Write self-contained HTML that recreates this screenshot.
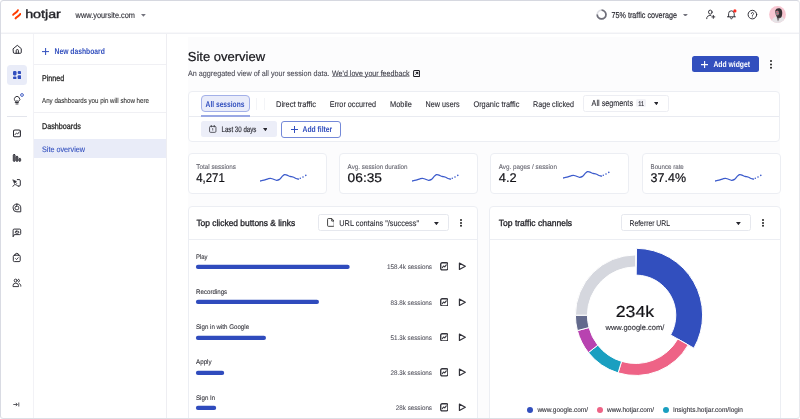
<!DOCTYPE html>
<html lang="en"><head><meta charset="utf-8"><title>Hotjar – Site overview</title>
<style>
html,body{margin:0;padding:0;background:#fff}
body{width:800px;height:419px;overflow:hidden;position:relative;font-family:"Liberation Sans", sans-serif}
#frame{position:absolute;left:0;top:0;width:800px;height:419px;box-sizing:border-box;border:1px solid #d6d8e0;border-right-color:#e6e8ed;border-bottom-color:#dddfe6;border-left-color:#d9dbe3;border-radius:3.500px;overflow:hidden;background:#fff}
#in{position:absolute;left:-1px;top:-1px;width:800px;height:419px}
.a{position:absolute;display:block}
.t{position:absolute;display:block;white-space:nowrap;line-height:1;transform-origin:0 50%}
.card{position:absolute;box-sizing:border-box;background:#fff;border:1px solid #eceef3;border-radius:4px}
.bar{position:absolute;height:4.200px;border-radius:2.100px;background:#2f4bbd}
</style></head><body><div id="frame"><div id="in">
<div class="a" style="left:188px;top:37px;width:592px;height:382px;background:#fcfcfd"></div>
<div class="a" style="left:0;top:32px;width:800px;height:1px;background:#f8f8fa"></div><div class="a" style="left:0;top:33px;width:800px;height:1px;background:#eff0f4"></div>
<div class="a" style="left:33px;top:34px;width:1px;height:386px;background:#f2f2f6"></div>
<div class="a" style="left:166px;top:34px;width:1px;height:386px;background:#eeeef2"></div>
<div class="a" style="left:34px;top:64px;width:132px;height:1px;background:#f0f0f4"></div>
<div class="a" style="left:34px;top:112px;width:132px;height:1px;background:#f0f0f4"></div>
<div class="a" style="left:34px;top:139.300px;width:132px;height:18.600px;background:#e9ecf8"></div>
<div class="a" style="left:6.600px;top:64.700px;width:20.400px;height:20.400px;border-radius:3.500px;background:#e9ecf8"></div>
<div class="a" style="left:7px;top:116px;width:20px;height:1px;background:#e3e5ec"></div>
<svg class="a" style="left:42.0px;top:47.6px" width="7.2" height="7.2" viewBox="0 0 7.2 7.2"><path d="M3.6 0V7.2M0 3.6H7.2" stroke="#324fbe" stroke-width="1" fill="none"/></svg><div class="a" style="left:692.4px;top:55.7px;width:66.400px;height:16.800px;background:#324fbe;border-radius:2.500px"></div><svg class="a" style="left:701.3px;top:60.6px" width="7.2" height="7.2" viewBox="0 0 7.2 7.2"><path d="M3.6 0V7.2M0 3.6H7.2" stroke="#fff" stroke-width="1.1" fill="none"/></svg><svg class="a" style="left:769px;top:58.800000000000004px" width="4" height="10.8" viewBox="0 0 4 10.8"><circle cx="2" cy="2.0" r="1.0" fill="#222"/><circle cx="2" cy="5.4" r="1.0" fill="#222"/><circle cx="2" cy="8.8" r="1.0" fill="#222"/></svg><svg class="a" style="left:412.500px;top:69.500px" width="7.200" height="7.200" viewBox="0 0 12 12" fill="none" stroke="#1c1c22" stroke-width="1.700"><rect x="1" y="1" width="10" height="10" rx="1.600"/><path d="M4 8L8 4" stroke-width="1.600"/><path d="M4.500 3.500H8.500V7.500Z" fill="#1c1c22" stroke-width="0.600"/></svg><div class="card" style="left:188px;top:91px;width:592px;height:51px"></div><div class="a" style="left:189px;top:116px;width:590px;height:1px;background:#e9ebf1"></div><div class="a" style="left:200.700px;top:95.200px;width:49.400px;height:17.300px;box-sizing:border-box;background:#e9ecfa;border:1px solid #a3b0e8;border-radius:4px"></div><div class="a" style="left:200.700px;top:115px;width:49.400px;height:1.700px;background:#9aa8e4"></div><div class="a" style="left:256px;top:97.500px;width:1px;height:12px;background:#f3f4f7"></div><div class="a" style="left:264px;top:97.500px;width:1px;height:12px;background:#f3f4f7"></div><div class="a" style="left:583.200px;top:94.500px;width:85.600px;height:17px;box-sizing:border-box;background:#fff;border:1px solid #edeef3;border-radius:2.500px"></div><div class="a" style="left:636px;top:99.400px;width:10.200px;height:7.800px;background:#f3f3f7;border-radius:1.500px"></div><svg class="a" style="left:653.6px;top:101.9px" width="4.8" height="3.2" viewBox="0 0 4.8 3.2"><path d="M0 0H4.8L2.4 3.2Z" fill="#26262e"/></svg><div class="a" style="left:200.800px;top:121.200px;width:76.200px;height:16px;background:#eceef8;border-radius:2.500px"></div><svg class="a" style="left:209px;top:125.300px" width="7.500" height="7.900" viewBox="0 0 14 14.800" fill="none" stroke="#2a2a32" stroke-width="1.400"><rect x="1" y="2.600" width="12" height="11.200" rx="2"/><path d="M4.200 0.600v3M9.800 0.600v3" stroke-linecap="round"/><path d="M7 6.500v4M5.800 7.200L7 6.500" stroke-width="1.200"/></svg><svg class="a" style="left:262.6px;top:128.1px" width="4.8" height="3.2" viewBox="0 0 4.8 3.2"><path d="M0 0H4.8L2.4 3.2Z" fill="#26262e"/></svg><div class="a" style="left:281px;top:120.800px;width:60px;height:16.800px;box-sizing:border-box;background:#fff;border:1px solid #7489d8;border-radius:3px"></div><svg class="a" style="left:290.6px;top:125.69999999999999px" width="7" height="7" viewBox="0 0 7 7"><path d="M3.5 0V7M0 3.5H7" stroke="#324fbe" stroke-width="1" fill="none"/></svg><div class="card" style="left:188px;top:206px;width:290px;height:230px"></div><div class="a" style="left:189px;top:239px;width:288px;height:1px;background:#eceef3"></div><div class="card" style="left:489px;top:206px;width:292px;height:230px"></div><div class="a" style="left:490px;top:239px;width:290px;height:1px;background:#eceef3"></div><div class="a" style="left:318.300px;top:214.300px;width:130.800px;height:17.200px;box-sizing:border-box;background:#fff;border:1px solid #e6e8ee;border-radius:2.500px"></div><div class="a" style="left:620.600px;top:214.300px;width:130.800px;height:17.200px;box-sizing:border-box;background:#fff;border:1px solid #e6e8ee;border-radius:2.500px"></div><svg class="a" style="left:326.600px;top:218.400px" width="7.800" height="8.900" viewBox="0 0 14 16" fill="none" stroke="#222" stroke-width="1.500" stroke-linejoin="round"><path d="M1 2.500A1.500 1.500 0 0 1 2.500 1H8.500L13 5.500V13.500A1.500 1.500 0 0 1 11.500 15H2.500A1.500 1.500 0 0 1 1 13.500Z"/><path d="M8.500 1V5.500H13"/></svg><svg class="a" style="left:433.8px;top:221.5px" width="4.8" height="3.2" viewBox="0 0 4.8 3.2"><path d="M0 0H4.8L2.4 3.2Z" fill="#26262e"/></svg><svg class="a" style="left:735.9px;top:221.5px" width="4.8" height="3.2" viewBox="0 0 4.8 3.2"><path d="M0 0H4.8L2.4 3.2Z" fill="#26262e"/></svg><svg class="a" style="left:458.9px;top:218.1px" width="4" height="9.8" viewBox="0 0 4 9.8"><circle cx="2" cy="2.0" r="1.0" fill="#222"/><circle cx="2" cy="4.9" r="1.0" fill="#222"/><circle cx="2" cy="7.8" r="1.0" fill="#222"/></svg><svg class="a" style="left:761.2px;top:218.1px" width="4" height="9.8" viewBox="0 0 4 9.8"><circle cx="2" cy="2.0" r="1.0" fill="#222"/><circle cx="2" cy="4.9" r="1.0" fill="#222"/><circle cx="2" cy="7.8" r="1.0" fill="#222"/></svg><div class="a" style="left:527px;top:407px;width:6px;height:6px;border-radius:50%;background:#324fbe"></div><div class="a" style="left:596.6px;top:407px;width:6px;height:6px;border-radius:50%;background:#ee6386"></div><div class="a" style="left:663px;top:407px;width:6px;height:6px;border-radius:50%;background:#1a9fc0"></div>
<div class="card" style="left:188px;top:153px;width:139px;height:41px"></div><div class="card" style="left:339px;top:153px;width:139px;height:41px"></div><div class="card" style="left:490px;top:153px;width:139px;height:41px"></div><div class="card" style="left:642px;top:153px;width:139px;height:41px"></div>
<svg class="a" style="left:260px;top:173px" width="48" height="10" viewBox="0 -1 48 10"><path d="M0,7C0.67,6.87 2.67,6.57 4,6.2C5.33,5.83 6.92,5.12 8,4.8C9.08,4.48 9.67,4.27 10.5,4.3C11.33,4.33 12.00,4.67 13,5C14.00,5.33 15.42,6.23 16.5,6.3C17.58,6.37 18.58,6.02 19.5,5.4C20.42,4.78 21.17,3.40 22,2.6C22.83,1.80 23.67,0.83 24.5,0.6C25.33,0.37 26.08,0.90 27,1.2C27.92,1.50 29.00,2.10 30,2.4C31.00,2.70 32.00,2.65 33,3C34.00,3.35 35.08,4.15 36,4.5C36.92,4.85 38.08,5.00 38.5,5.1" fill="none" stroke="#3d5ccc" stroke-width="1.3" stroke-linecap="round" stroke-linejoin="round"/><circle cx="40.3" cy="4.3" r="0.8" fill="#3d5ccc"/><circle cx="43" cy="3" r="0.8" fill="#3d5ccc"/><circle cx="45.8" cy="1.4" r="0.8" fill="#3d5ccc"/></svg><svg class="a" style="left:412px;top:172.9px" width="48" height="10" viewBox="0 -1 48 10"><path d="M0,7C0.67,6.87 2.67,6.57 4,6.2C5.33,5.83 6.92,5.12 8,4.8C9.08,4.48 9.67,4.27 10.5,4.3C11.33,4.33 12.00,4.67 13,5C14.00,5.33 15.42,6.23 16.5,6.3C17.58,6.37 18.58,6.02 19.5,5.4C20.42,4.78 21.17,3.40 22,2.6C22.83,1.80 23.67,0.83 24.5,0.6C25.33,0.37 26.08,0.90 27,1.2C27.92,1.50 29.00,2.10 30,2.4C31.00,2.70 32.00,2.65 33,3C34.00,3.35 35.08,4.15 36,4.5C36.92,4.85 38.08,5.00 38.5,5.1" fill="none" stroke="#3d5ccc" stroke-width="1.3" stroke-linecap="round" stroke-linejoin="round"/><circle cx="40.3" cy="4.3" r="0.8" fill="#3d5ccc"/><circle cx="43" cy="3" r="0.8" fill="#3d5ccc"/><circle cx="45.8" cy="1.4" r="0.8" fill="#3d5ccc"/></svg><svg class="a" style="left:563.3px;top:170px" width="48" height="10" viewBox="0 -1 48 10"><path d="M0,7C0.67,6.87 2.67,6.57 4,6.2C5.33,5.83 6.92,5.12 8,4.8C9.08,4.48 9.67,4.27 10.5,4.3C11.33,4.33 12.00,4.67 13,5C14.00,5.33 15.42,6.23 16.5,6.3C17.58,6.37 18.58,6.02 19.5,5.4C20.42,4.78 21.17,3.40 22,2.6C22.83,1.80 23.67,0.83 24.5,0.6C25.33,0.37 26.08,0.90 27,1.2C27.92,1.50 29.00,2.10 30,2.4C31.00,2.70 32.00,2.65 33,3C34.00,3.35 35.08,4.15 36,4.5C36.92,4.85 38.08,5.00 38.5,5.1" fill="none" stroke="#3d5ccc" stroke-width="1.3" stroke-linecap="round" stroke-linejoin="round"/><circle cx="40.3" cy="4.3" r="0.8" fill="#3d5ccc"/><circle cx="43" cy="3" r="0.8" fill="#3d5ccc"/><circle cx="45.8" cy="1.4" r="0.8" fill="#3d5ccc"/></svg><svg class="a" style="left:714.8px;top:172.9px" width="48" height="10" viewBox="0 -1 48 10"><path d="M0,7C0.67,6.87 2.67,6.57 4,6.2C5.33,5.83 6.92,5.12 8,4.8C9.08,4.48 9.67,4.27 10.5,4.3C11.33,4.33 12.00,4.67 13,5C14.00,5.33 15.42,6.23 16.5,6.3C17.58,6.37 18.58,6.02 19.5,5.4C20.42,4.78 21.17,3.40 22,2.6C22.83,1.80 23.67,0.83 24.5,0.6C25.33,0.37 26.08,0.90 27,1.2C27.92,1.50 29.00,2.10 30,2.4C31.00,2.70 32.00,2.65 33,3C34.00,3.35 35.08,4.15 36,4.5C36.92,4.85 38.08,5.00 38.5,5.1" fill="none" stroke="#3d5ccc" stroke-width="1.3" stroke-linecap="round" stroke-linejoin="round"/><circle cx="40.3" cy="4.3" r="0.8" fill="#3d5ccc"/><circle cx="43" cy="3" r="0.8" fill="#3d5ccc"/><circle cx="45.8" cy="1.4" r="0.8" fill="#3d5ccc"/></svg>
<svg class="a" style="left:190px;top:260.00px" width="170" height="12" viewBox="190 260 170 12"><rect x="195.900" y="264.850" width="153.8" height="4.150" rx="2.075" fill="#2f4bbd"/></svg><svg class="a" style="left:439.900px;top:262.40px" width="8.600" height="8.600" viewBox="0 0 12 12"><rect x="1" y="1" width="10" height="10" rx="2" fill="none" stroke="#33333b" stroke-width="1.900"/><path d="M3.2 7.800L5 5.600L6.600 6.800L8.800 4" fill="none" stroke="#33333b" stroke-width="1.500" stroke-linecap="round" stroke-linejoin="round"/></svg><svg class="a" style="left:457.5px;top:262.40px" width="8.600" height="8.600" viewBox="0 0 12 12"><path d="M2 1.6L10.2 6L2 10.4Z" fill="none" stroke="#33333b" stroke-width="1.7" stroke-linejoin="round"/></svg><svg class="a" style="left:190px;top:295.25px" width="170" height="12" viewBox="190 260 170 12"><rect x="195.900" y="264.850" width="123.1" height="4.150" rx="2.075" fill="#2f4bbd"/></svg><svg class="a" style="left:439.900px;top:297.65px" width="8.600" height="8.600" viewBox="0 0 12 12"><rect x="1" y="1" width="10" height="10" rx="2" fill="none" stroke="#33333b" stroke-width="1.900"/><path d="M3.2 7.800L5 5.600L6.600 6.800L8.800 4" fill="none" stroke="#33333b" stroke-width="1.500" stroke-linecap="round" stroke-linejoin="round"/></svg><svg class="a" style="left:457.5px;top:297.65px" width="8.600" height="8.600" viewBox="0 0 12 12"><path d="M2 1.6L10.2 6L2 10.4Z" fill="none" stroke="#33333b" stroke-width="1.7" stroke-linejoin="round"/></svg><svg class="a" style="left:190px;top:330.50px" width="170" height="12" viewBox="190 260 170 12"><rect x="195.900" y="264.850" width="70.1" height="4.150" rx="2.075" fill="#2f4bbd"/></svg><svg class="a" style="left:439.900px;top:332.90px" width="8.600" height="8.600" viewBox="0 0 12 12"><rect x="1" y="1" width="10" height="10" rx="2" fill="none" stroke="#33333b" stroke-width="1.900"/><path d="M3.2 7.800L5 5.600L6.600 6.800L8.800 4" fill="none" stroke="#33333b" stroke-width="1.500" stroke-linecap="round" stroke-linejoin="round"/></svg><svg class="a" style="left:457.5px;top:332.90px" width="8.600" height="8.600" viewBox="0 0 12 12"><path d="M2 1.6L10.2 6L2 10.4Z" fill="none" stroke="#33333b" stroke-width="1.7" stroke-linejoin="round"/></svg><svg class="a" style="left:190px;top:365.75px" width="170" height="12" viewBox="190 260 170 12"><rect x="195.900" y="264.850" width="28.3" height="4.150" rx="2.075" fill="#2f4bbd"/></svg><svg class="a" style="left:439.900px;top:368.15px" width="8.600" height="8.600" viewBox="0 0 12 12"><rect x="1" y="1" width="10" height="10" rx="2" fill="none" stroke="#33333b" stroke-width="1.900"/><path d="M3.2 7.800L5 5.600L6.600 6.800L8.800 4" fill="none" stroke="#33333b" stroke-width="1.500" stroke-linecap="round" stroke-linejoin="round"/></svg><svg class="a" style="left:457.5px;top:368.15px" width="8.600" height="8.600" viewBox="0 0 12 12"><path d="M2 1.6L10.2 6L2 10.4Z" fill="none" stroke="#33333b" stroke-width="1.7" stroke-linejoin="round"/></svg><svg class="a" style="left:190px;top:401.00px" width="170" height="12" viewBox="190 260 170 12"><rect x="195.900" y="264.850" width="20.3" height="4.150" rx="2.075" fill="#2f4bbd"/></svg><svg class="a" style="left:439.900px;top:403.40px" width="8.600" height="8.600" viewBox="0 0 12 12"><rect x="1" y="1" width="10" height="10" rx="2" fill="none" stroke="#33333b" stroke-width="1.900"/><path d="M3.2 7.800L5 5.600L6.600 6.800L8.800 4" fill="none" stroke="#33333b" stroke-width="1.500" stroke-linecap="round" stroke-linejoin="round"/></svg><svg class="a" style="left:457.5px;top:403.40px" width="8.600" height="8.600" viewBox="0 0 12 12"><path d="M2 1.6L10.2 6L2 10.4Z" fill="none" stroke="#33333b" stroke-width="1.7" stroke-linejoin="round"/></svg>
<svg class="a" style="left:560px;top:240px" width="160" height="150" viewBox="560 240 160 150"><path d="M636.52,248.30A66.9,66.9 0 0 1 693.93,348.14L670.60,334.95A40.1,40.1 0 0 0 636.19,275.10Z" fill="#324fbe" stroke="#fff" stroke-width="1"/><path d="M688.18,344.89A60.3,60.3 0 0 1 618.07,372.87L621.58,361.39A48.3,48.3 0 0 0 677.74,338.98Z" fill="#ee6386" stroke="#fff" stroke-width="1"/><path d="M618.07,372.87A60.3,60.3 0 0 1 588.38,352.57L597.80,345.14A48.3,48.3 0 0 0 621.58,361.39Z" fill="#1a9fc0" stroke="#fff" stroke-width="1"/><path d="M588.38,352.57A60.3,60.3 0 0 1 577.40,330.60L589.00,327.54A48.3,48.3 0 0 0 597.80,345.14Z" fill="#b843b0" stroke="#fff" stroke-width="1"/><path d="M577.40,330.60A60.3,60.3 0 0 1 575.40,315.20L587.40,315.20A48.3,48.3 0 0 0 589.00,327.54Z" fill="#636a8c" stroke="#fff" stroke-width="1"/><path d="M575.40,315.20A60.3,60.3 0 0 1 635.70,254.90L635.70,266.90A48.3,48.3 0 0 0 587.40,315.20Z" fill="#d5d7de" stroke="#fff" stroke-width="1"/></svg>
<svg class="a" style="left:11.50px;top:44.30px" width="10.6" height="10.6" viewBox="0 0 24 24" fill="none" stroke="#26262e" stroke-width="2.2" stroke-linecap="round" stroke-linejoin="round"><path d="M3 10.5L12 3l9 7.5V19a2 2 0 0 1-2 2H5a2 2 0 0 1-2-2z"/><path d="M9.5 21v-6a2.5 2.5 0 0 1 5 0v6"/></svg><svg class="a" style="left:12.6px;top:70.6px" width="8.2" height="8.2" viewBox="0 0 16 16" fill="#324fbe"><rect x="0" y="0" width="6.9" height="8.7" rx="2.2"/><rect x="9.1" y="0" width="6.9" height="6" rx="2.2"/><rect x="0" y="10.9" width="6.9" height="5.1" rx="2.2"/><rect x="9.1" y="8.2" width="6.900" height="7.8" rx="2.2"/></svg><svg class="a" style="left:11.60px;top:94.80px" width="10" height="10" viewBox="0 0 24 24" fill="none" stroke="#26262e" stroke-width="2.2" stroke-linecap="round" stroke-linejoin="round"><path d="M8.5 15.5a6.5 6.5 0 1 1 7 0V18h-7z"/><path d="M9.5 21.5h5"/><path d="M12 18v-5"/></svg><svg class="a" style="left:20.4px;top:92.8px" width="4" height="4" viewBox="0 0 4 4"><circle cx="2" cy="2" r="1.4" fill="#fff" stroke="#324fbe" stroke-width="0.9"/></svg><svg class="a" style="left:12px;top:128px" width="10" height="10" viewBox="12 128 10 10" fill="none" stroke="#26262e" stroke-width="1.05" stroke-linecap="round" stroke-linejoin="round"><rect x="13.5" y="129.900" width="6.900" height="6.900" rx="1.400"/><path d="M15 134.700l1.500-1.700 1.200 1 1.500-2" stroke-width="0.85"/></svg><svg class="a" style="left:12px;top:153px" width="10" height="10" viewBox="12 153 10 10" fill="none" stroke="#26262e" stroke-width="0.8" stroke-linecap="round" stroke-linejoin="round"><rect x="13.250" y="154.500" width="1.900" height="6.900" rx="0.900" fill="#6a6a72"/><rect x="16.050" y="156.400" width="1.900" height="5" rx="0.900" fill="#6a6a72"/><rect x="18.850" y="158.400" width="1.800" height="3" rx="0.900" fill="#6a6a72"/></svg><svg class="a" style="left:12px;top:178px" width="10" height="10" viewBox="12 178 10 10" fill="none" stroke="#26262e" stroke-width="0.95" stroke-linecap="round" stroke-linejoin="round"><path d="M17.300 179.600H19.200a1.100 1.100 0 0 1 1.100 1.100V185a1.100 1.100 0 0 1-1.100 1.100H18.300"/><path d="M13.100 179.900L16.500 181.400L15.100 182L14.600 183.300Z" fill="#26262e" stroke-width="0.600"/><path d="M15.200 182l1.500 1.500" stroke-width="0.800"/><path d="M12.900 186.300C13.500 185.100 14.500 184.500 15.400 184.600C16.400 184.700 17 185.700 18.300 186.100"/></svg><svg class="a" style="left:12px;top:203px" width="10" height="10" viewBox="12 203 10 10" fill="none" stroke="#26262e" stroke-width="0.95" stroke-linecap="round" stroke-linejoin="round"><path d="M16.900 204.100a3.850 3.850 0 1 0 0 7.700h3.850v-3.850a3.850 3.850 0 0 0-3.850-3.850z"/><rect x="15.100" y="206.100" width="3.600" height="3.600" rx="1.300"/></svg><svg class="a" style="left:12px;top:227px" width="10" height="11" viewBox="12 227 10 11" fill="none" stroke="#26262e" stroke-width="0.95" stroke-linecap="round" stroke-linejoin="round"><path d="M13.100 236.400V230.200a1.100 1.100 0 0 1 1.100-1.100H19.600a1.100 1.100 0 0 1 1.100 1.100V233.500a1.100 1.100 0 0 1-1.100 1.100H14.700z"/><rect x="15.300" y="231.200" width="3.500" height="2" rx="1"/></svg><svg class="a" style="left:12px;top:252px" width="10" height="11" viewBox="12 252 10 11" fill="none" stroke="#26262e" stroke-width="0.95" stroke-linecap="round" stroke-linejoin="round"><rect x="13.300" y="255.200" width="6.900" height="6.400" rx="1.100"/><path d="M14.900 255.200a1.900 1.900 0 0 1 3.800 0"/><path d="M15.500 258.600l1 1 1.700-1.900" stroke-width="0.85"/></svg><svg class="a" style="left:12px;top:277px" width="10" height="11" viewBox="12 277 10 11" fill="none" stroke="#26262e" stroke-width="0.9" stroke-linecap="round" stroke-linejoin="round"><circle cx="15.700" cy="280.600" r="1.500"/><path d="M13 286.200v-.5a2.400 2.400 0 0 1 2.400-2.400h.7a2.400 2.400 0 0 1 2.400 2.400v.5z"/><path d="M18.400 279.200a1.500 1.500 0 0 1 0 2.900M19.400 283.600c.9.400 1.400 1.200 1.400 2.200v.4" /></svg><svg class="a" style="left:13.4px;top:401.6px" width="6.6" height="5" viewBox="0 0 13 10" fill="none" stroke="#26262e" stroke-width="1.5"><path d="M0.500 5H8M5.500 1.800L8.700 5L5.500 8.200M11.500 1v8"/></svg>
<svg class="a" style="left:596.4px;top:8.9px" width="11.2" height="11.2" viewBox="0 0 20 20" fill="none"><circle cx="10" cy="10" r="7.800" stroke="#dcdde3" stroke-width="3.100"/><path d="M10 2.200A7.800 7.800 0 1 1 2.200 10" stroke="#70707a" stroke-width="3.100"/></svg><svg class="a" style="left:704px;top:8px" width="14" height="13" viewBox="704 8 14 13" fill="none" stroke="#26262e" stroke-width="0.9" stroke-linecap="round" stroke-linejoin="round"><ellipse cx="710.300" cy="12.100" rx="1.800" ry="2"/><path d="M706.700 18.700C706.500 16.600 708 15.300 710.900 15.300"/><path d="M713.300 15.400v3M711.800 16.900h3"/></svg><svg class="a" style="left:725px;top:8px" width="14" height="13" viewBox="725 8 14 13" fill="none" stroke="#26262e" stroke-width="0.9" stroke-linecap="round" stroke-linejoin="round"><path d="M728.600 16.700V13.600a2.800 2.800 0 0 1 5.600 0V16.700"/><path d="M727.400 16.800H735.400"/><path d="M730.200 17.400L731.400 19.200L732.600 17.400" stroke-width="0.800"/></svg><svg class="a" style="left:733.3px;top:9px" width="3.8" height="3.8" viewBox="0 0 4 4"><circle cx="2" cy="2" r="1.700" fill="#ff2a1f"/></svg><svg class="a" style="left:746px;top:8px" width="13" height="13" viewBox="746 8 13 13" fill="none" stroke="#26262e" stroke-width="0.95" stroke-linecap="round" stroke-linejoin="round"><circle cx="752.400" cy="14.600" r="4.300"/><path d="M751.300 13.600a1.150 1.150 0 1 1 1.700 1c-.4.250-.6.500-.6 1" stroke-width="0.800"/><path d="M752.400 16.900v.1" stroke-width="0.900"/></svg><svg class="a" style="left:768.6px;top:5.900px" width="17" height="17" viewBox="768.6 5.900 17 17"><defs><clipPath id="av"><circle cx="777.1" cy="14.400" r="8.400"/></clipPath></defs><circle cx="777.1" cy="14.400" r="8.400" fill="#f7c6d1"/><g clip-path="url(#av)"><path d="M771 23.500C771 19.300 773 16.900 776 16.400L780.500 16.200C783.400 16.900 784.600 19.600 784.600 23.500Z" fill="#e6e3e6"/><path d="M776.200 17.500L777.600 21.500L779.600 17.200Z" fill="#7d7679"/><path d="M775 10.500C775.400 7.600 780.200 7.200 781.300 9.800C782.300 12.200 781.800 15.800 780.600 17.600L777 18C775.600 16 774.700 13 775 10.500Z" fill="#363133"/><ellipse cx="777" cy="13" rx="1.700" ry="2.500" fill="#8e8689"/><circle cx="776.600" cy="11.300" r="0.700" fill="#f0607e"/><circle cx="777.500" cy="13.300" r="0.700" fill="#f0607e"/></g></svg><svg class="a" style="left:12.2px;top:8.8px" width="9" height="10.800" viewBox="0 0 18 21.600" fill="none" stroke="#ff3c00" stroke-width="4" stroke-linecap="round"><path d="M2.400 11.600C3.400 8.400 10.400 7.400 11.800 2.600"/><path d="M7.200 18.800C8.200 15.600 15.200 14.600 16.600 9.800"/></svg><svg class="a" style="left:141.4px;top:13.799999999999999px" width="4.8" height="2.8" viewBox="0 0 4.8 2.8"><path d="M0 0H4.8L2.4 2.8Z" fill="#74747e"/></svg><svg class="a" style="left:683.4px;top:13.5px" width="4.8" height="2.8" viewBox="0 0 4.8 2.8"><path d="M0 0H4.8L2.4 2.8Z" fill="#74747e"/></svg>
<svg class="a" id="txt" style="left:0;top:0;text-rendering:geometricPrecision;will-change:transform" width="800" height="419" viewBox="0 0 800 419" font-family="Liberation Sans, sans-serif">
<text x="25.20" y="18.30" font-size="11.75" fill="#24242a" stroke="#24242a" stroke-width="0.36" textLength="35.70" lengthAdjust="spacingAndGlyphs">hotjar</text>
<text x="75.60" y="17.70" font-size="8.32" fill="#2e2e36" stroke="#2e2e36" stroke-width="0.12" textLength="59.40" lengthAdjust="spacingAndGlyphs">www.yoursite.com</text>
<text x="611.60" y="17.70" font-size="8.63" fill="#2e2e36" stroke="#2e2e36" stroke-width="0.2" textLength="65.40" lengthAdjust="spacingAndGlyphs">75% traffic coverage</text>
<text x="54.50" y="54.00" font-size="8.32" fill="#324fbe" font-weight="700" textLength="50.40" lengthAdjust="spacingAndGlyphs">New dashboard</text>
<text x="42.00" y="80.60" font-size="8.32" fill="#222" stroke="#222" stroke-width="0.27" textLength="22.10" lengthAdjust="spacingAndGlyphs">Pinned</text>
<text x="42.00" y="102.50" font-size="7.18" fill="#333" stroke="#333" stroke-width="0.1" textLength="107.00" lengthAdjust="spacingAndGlyphs">Any dashboards you pin will show here</text>
<text x="42.00" y="128.75" font-size="8.32" fill="#222" stroke="#222" stroke-width="0.27" textLength="38.75" lengthAdjust="spacingAndGlyphs">Dashboards</text>
<text x="42.00" y="151.60" font-size="7.9" fill="#324fbe" stroke="#324fbe" stroke-width="0.1" textLength="43.00" lengthAdjust="spacingAndGlyphs">Site overview</text>
<text x="187.80" y="60.70" font-size="13.0" fill="#15151a" stroke="#15151a" stroke-width="0.22" textLength="77.30" lengthAdjust="spacingAndGlyphs">Site overview</text>
<text x="188.00" y="76.30" font-size="7.8" fill="#4a4a55" stroke="#4a4a55" stroke-width="0.1" textLength="141.50" lengthAdjust="spacingAndGlyphs">An aggregated view of all your session data.</text>
<text x="332.00" y="76.30" font-size="7.8" fill="#3a3a45" stroke="#3a3a45" stroke-width="0.1" textLength="77.50" lengthAdjust="spacingAndGlyphs">We'd love your feedback</text>
<text x="713.40" y="66.90" font-size="8.32" fill="#fff" font-weight="700" textLength="36.60" lengthAdjust="spacingAndGlyphs">Add widget</text>
<text x="205.60" y="106.70" font-size="8.32" fill="#324fbe" font-weight="700" textLength="38.80" lengthAdjust="spacingAndGlyphs">All sessions</text>
<text x="276.00" y="106.70" font-size="8.32" fill="#2a2a32" stroke="#2a2a32" stroke-width="0.1" textLength="40.00" lengthAdjust="spacingAndGlyphs">Direct traffic</text>
<text x="329.70" y="106.70" font-size="8.32" fill="#2a2a32" stroke="#2a2a32" stroke-width="0.1" textLength="46.30" lengthAdjust="spacingAndGlyphs">Error occurred</text>
<text x="390.00" y="106.70" font-size="8.32" fill="#2a2a32" stroke="#2a2a32" stroke-width="0.1" textLength="21.90" lengthAdjust="spacingAndGlyphs">Mobile</text>
<text x="425.60" y="106.70" font-size="8.32" fill="#2a2a32" stroke="#2a2a32" stroke-width="0.1" textLength="34.10" lengthAdjust="spacingAndGlyphs">New users</text>
<text x="473.40" y="106.70" font-size="8.32" fill="#2a2a32" stroke="#2a2a32" stroke-width="0.1" textLength="46.00" lengthAdjust="spacingAndGlyphs">Organic traffic</text>
<text x="533.00" y="106.70" font-size="8.32" fill="#2a2a32" stroke="#2a2a32" stroke-width="0.1" textLength="41.00" lengthAdjust="spacingAndGlyphs">Rage clicked</text>
<text x="591.60" y="106.10" font-size="8.63" fill="#2a2a32" stroke="#2a2a32" stroke-width="0.1" textLength="41.40" lengthAdjust="spacingAndGlyphs">All segments</text>
<text x="638.20" y="105.60" font-size="6.86" fill="#2a2a32" stroke="#2a2a32" stroke-width="0.1" textLength="6.00" lengthAdjust="spacingAndGlyphs">11</text>
<text x="221.50" y="131.80" font-size="7.9" fill="#2a2a32" stroke="#2a2a32" stroke-width="0.15" textLength="34.90" lengthAdjust="spacingAndGlyphs">Last 30 days</text>
<text x="302.50" y="131.75" font-size="8.32" fill="#324fbe" font-weight="700" textLength="29.75" lengthAdjust="spacingAndGlyphs">Add filter</text>
<text x="196.30" y="168.70" font-size="6.76" fill="#666670" stroke="#666670" stroke-width="0.1" textLength="39.70" lengthAdjust="spacingAndGlyphs">Total sessions</text>
<text x="196.30" y="182.00" font-size="12.69" fill="#121217" stroke="#121217" stroke-width="0.22" textLength="28.40" lengthAdjust="spacingAndGlyphs">4,271</text>
<text x="347.60" y="168.70" font-size="6.76" fill="#666670" stroke="#666670" stroke-width="0.1" textLength="60.00" lengthAdjust="spacingAndGlyphs">Avg. session duration</text>
<text x="347.60" y="182.00" font-size="12.69" fill="#121217" stroke="#121217" stroke-width="0.22" textLength="34.40" lengthAdjust="spacingAndGlyphs">06:35</text>
<text x="498.75" y="168.70" font-size="6.76" fill="#666670" stroke="#666670" stroke-width="0.1" textLength="58.15" lengthAdjust="spacingAndGlyphs">Avg. pages / session</text>
<text x="498.75" y="182.00" font-size="12.69" fill="#121217" stroke="#121217" stroke-width="0.22" textLength="17.85" lengthAdjust="spacingAndGlyphs">4.2</text>
<text x="650.60" y="168.70" font-size="6.76" fill="#666670" stroke="#666670" stroke-width="0.1" textLength="33.20" lengthAdjust="spacingAndGlyphs">Bounce rate</text>
<text x="650.60" y="182.00" font-size="12.69" fill="#121217" stroke="#121217" stroke-width="0.22" textLength="35.40" lengthAdjust="spacingAndGlyphs">37.4%</text>
<text x="196.40" y="225.65" font-size="8.94" fill="#1c1c22" stroke="#1c1c22" stroke-width="0.3" textLength="98.70" lengthAdjust="spacingAndGlyphs">Top clicked buttons &amp; links</text>
<text x="339.30" y="225.60" font-size="8.32" fill="#2a2a32" stroke="#2a2a32" stroke-width="0.1" textLength="79.70" lengthAdjust="spacingAndGlyphs">URL contains "/success"</text>
<text x="498.80" y="225.60" font-size="8.94" fill="#1c1c22" stroke="#1c1c22" stroke-width="0.3" textLength="73.30" lengthAdjust="spacingAndGlyphs">Top traffic channels</text>
<text x="629.50" y="225.60" font-size="8.32" fill="#2a2a32" stroke="#2a2a32" stroke-width="0.1" textLength="40.50" lengthAdjust="spacingAndGlyphs">Referrer URL</text>
<text x="196.00" y="258.60" font-size="6.66" fill="#33333b" stroke="#33333b" stroke-width="0.1" textLength="11.60" lengthAdjust="spacingAndGlyphs">Play</text>
<text x="387.10" y="269.30" font-size="6.66" fill="#55555f" stroke="#55555f" stroke-width="0.1" textLength="44.90" lengthAdjust="spacingAndGlyphs">158.4k sessions</text>
<text x="196.00" y="293.85" font-size="6.66" fill="#33333b" stroke="#33333b" stroke-width="0.1" textLength="31.20" lengthAdjust="spacingAndGlyphs">Recordings</text>
<text x="390.50" y="304.55" font-size="6.66" fill="#55555f" stroke="#55555f" stroke-width="0.1" textLength="41.50" lengthAdjust="spacingAndGlyphs">83.8k sessions</text>
<text x="196.00" y="329.10" font-size="6.66" fill="#33333b" stroke="#33333b" stroke-width="0.1" textLength="53.10" lengthAdjust="spacingAndGlyphs">Sign in with Google</text>
<text x="390.50" y="339.80" font-size="6.66" fill="#55555f" stroke="#55555f" stroke-width="0.1" textLength="41.50" lengthAdjust="spacingAndGlyphs">51.3k sessions</text>
<text x="196.00" y="364.35" font-size="6.66" fill="#33333b" stroke="#33333b" stroke-width="0.1" textLength="15.60" lengthAdjust="spacingAndGlyphs">Apply</text>
<text x="390.50" y="375.05" font-size="6.66" fill="#55555f" stroke="#55555f" stroke-width="0.1" textLength="41.50" lengthAdjust="spacingAndGlyphs">28.3k sessions</text>
<text x="196.00" y="399.60" font-size="6.66" fill="#33333b" stroke="#33333b" stroke-width="0.1" textLength="19.20" lengthAdjust="spacingAndGlyphs">Sign In</text>
<text x="395.80" y="410.30" font-size="6.66" fill="#55555f" stroke="#55555f" stroke-width="0.1" textLength="36.20" lengthAdjust="spacingAndGlyphs">28k sessions</text>
<text x="615.70" y="316.90" font-size="16.02" fill="#121217" stroke="#121217" stroke-width="0.2" textLength="38.40" lengthAdjust="spacingAndGlyphs">234k</text>
<text x="605.50" y="329.90" font-size="7.7" fill="#2a2a32" stroke="#2a2a32" stroke-width="0.1" textLength="58.80" lengthAdjust="spacingAndGlyphs">www.google.com/</text>
<text x="537.40" y="412.30" font-size="6.86" fill="#33333b" stroke="#33333b" stroke-width="0.1" textLength="50.60" lengthAdjust="spacingAndGlyphs">www.google.com/</text>
<text x="607.00" y="412.30" font-size="6.86" fill="#33333b" stroke="#33333b" stroke-width="0.1" textLength="47.00" lengthAdjust="spacingAndGlyphs">www.hotjar.com/</text>
<text x="672.90" y="412.30" font-size="6.86" fill="#33333b" stroke="#33333b" stroke-width="0.1" textLength="70.10" lengthAdjust="spacingAndGlyphs">Insights.hotjar.com/login</text>
<rect x="332" y="76.250" width="77.500" height="0.650" fill="#6a6a75"/>
</svg>
</div></div></body></html>
